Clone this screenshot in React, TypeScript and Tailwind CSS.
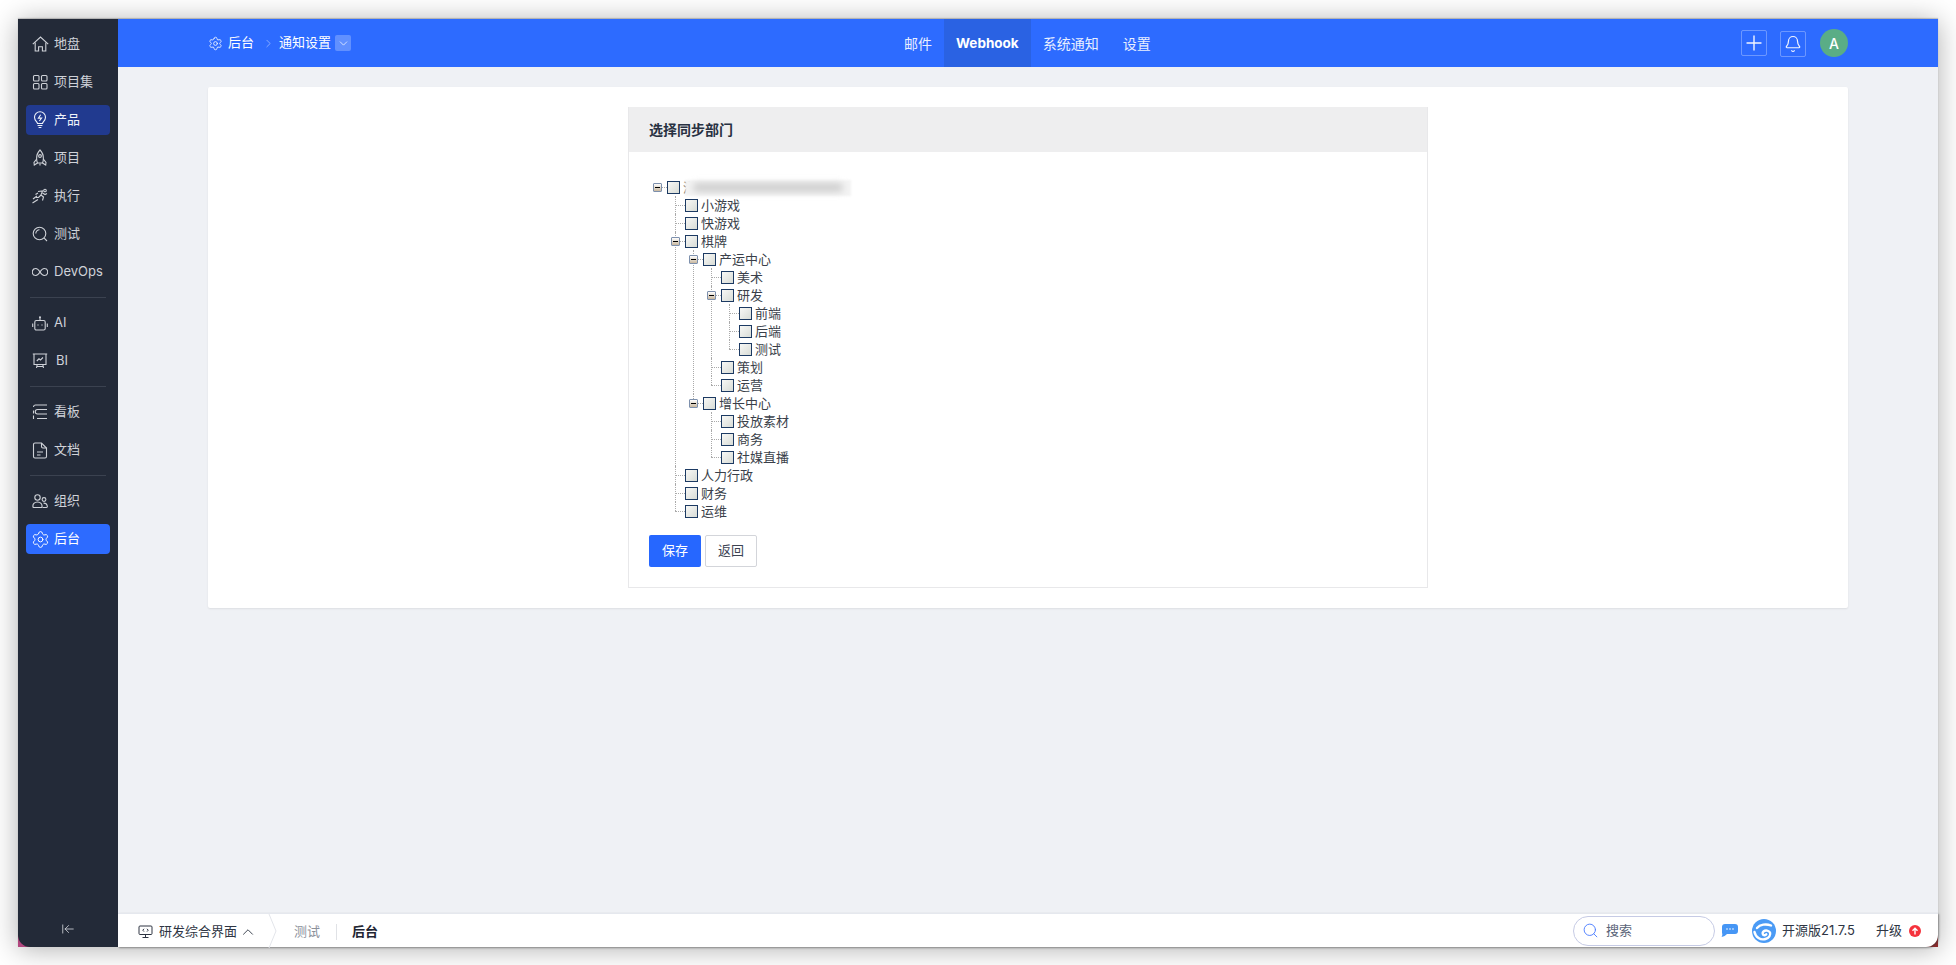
import { Bell, ChevronDown, ChevronRight, ChevronUp, Plus, Search, ArrowLeftToLine, Settings } from "lucide-react";
import type { ReactNode } from "react";

const font = "font-['Inter','Noto_Sans_CJK_SC',sans-serif]";

function IconHouse() {
  return (
    <svg width="17" height="16" viewBox="0 0 17 16" fill="none" stroke="currentColor" strokeWidth="1.1">
      <path d="M.8 8.200 8.500 1l7.700 7.200" />
      <path d="M3.200 6.600V15h3.400v-4.200h3.800V15h3.400V6.600" />
    </svg>
  );
}

function IconGrid() {
  return (
    <svg width="16" height="16" viewBox="0 0 16 16" fill="none" stroke="currentColor" strokeWidth="1.1">
      <rect x="1.500" y="1.500" width="5.500" height="5.500" rx="1" />
      <rect x="9.500" y="1.500" width="5.500" height="5.500" rx="1" />
      <rect x="1.500" y="9.500" width="5.500" height="5.500" rx="1" />
      <rect x="9.500" y="9.500" width="5.500" height="5.500" rx="1" />
    </svg>
  );
}

function IconBulb() {
  return (
    <svg width="16" height="18" viewBox="0 0 16 18" fill="none" stroke="currentColor" strokeWidth="1.1">
      <path d="M5.500 12.500c0-1.600-3-2.600-3-6.200A5.500 5.500 0 0 1 8 .8a5.500 5.500 0 0 1 5.500 5.500c0 3.600-3 4.600-3 6.200z" />
      <path d="M8.600 3.800 6.400 7.100h3.200L7.400 10" />
      <path d="M5.600 14.500h4.800M6.600 16.500h2.800" />
    </svg>
  );
}

function IconRocket() {
  return (
    <svg width="16" height="18" viewBox="0 0 16 18" fill="none" stroke="currentColor" strokeWidth="1.1">
      <path d="M8 1C5.600 3.400 4.600 6.500 4.600 9.500c0 1.700.3 3.200.9 4.500h5c.6-1.300.9-2.800.9-4.500C11.400 6.500 10.400 3.400 8 1z" />
      <circle cx="8" cy="7" r="1.400" />
      <path d="M4.700 10 2 13.500 2.300 16 5.500 14M11.300 10 14 13.500 13.700 16 10.500 14M8 14.500V16.500" />
    </svg>
  );
}

function IconRun() {
  return (
    <svg width="16" height="16" viewBox="0 0 16 16" fill="none" stroke="currentColor" strokeWidth="1.1">
      <circle cx="13" cy="2.500" r="1.300" />
      <path d="M6 3.500 10.500 3 9 7l2.500 2-1 3.500M9 7 6.500 9.500 4 9.500M10.500 5 13 6.500 15 5.500" />
      <path d="M1 11 5 8M.5 15 6 11.500M3.500 6.500 6 5" />
    </svg>
  );
}

function IconTest() {
  return (
    <svg width="16" height="16" viewBox="0 0 16 16" fill="none" stroke="currentColor" strokeWidth="1.1">
      <circle cx="7.500" cy="7.500" r="6.300" />
      <path d="M3.800 7.500a3.700 3.700 0 0 1 3.700-3.700M12.200 12.200 15 15" />
    </svg>
  );
}

function IconLoop() {
  return (
    <svg width="16" height="10" viewBox="0 0 16 10" fill="none" stroke="currentColor" strokeWidth="1.1">
      <path d="M8 5C6.600 2.800 5.500 1.500 3.800 1.500a3.500 3.500 0 0 0 0 7C5.500 8.500 6.600 7.200 8 5c1.400-2.200 2.500-3.500 4.200-3.500a3.500 3.500 0 0 1 0 7C10.500 8.500 9.400 7.200 8 5z" />
    </svg>
  );
}

function IconBot() {
  return (
    <svg width="16" height="15" viewBox="0 0 16 15" fill="none" stroke="currentColor" strokeWidth="1.1">
      <rect x="2.800" y="4.500" width="10.400" height="9.500" rx="1.500" />
      <path d="M8 1.500v3M.7 7.500v3.500M15.300 7.500v3.500" />
      <circle cx="8" cy="1.200" r=".5" />
      <path d="M5.600 9h.8M9.600 9h.8" strokeWidth="1.500" />
    </svg>
  );
}

function IconBoardChart() {
  return (
    <svg width="16" height="16" viewBox="0 0 16 16" fill="none" stroke="currentColor" strokeWidth="1.1">
      <path d="M.8 1h14.400M2 1v10.500h12V1M4.500 15l.7-3.500M11.500 15l-.7-3.500M4.500 13.500h7" />
      <path d="M4.800 8 7 5.800l1.500 1.200L11 4.500" />
    </svg>
  );
}

function IconBoard() {
  return (
    <svg width="16" height="16" viewBox="0 0 16 16" fill="none" stroke="currentColor" strokeWidth="1.1">
      <path d="M15 1H3.500a2 2 0 0 0-2 2M15 5.500H5.500a2 2 0 0 0 0 4.500H15M15 14.500H5M1.500 6.500v3M1.500 11.500v3.500" />
    </svg>
  );
}

function IconDoc() {
  return (
    <svg width="16" height="17" viewBox="0 0 16 17" fill="none" stroke="currentColor" strokeWidth="1.1">
      <path d="M9.500 1H3a1.500 1.500 0 0 0-1.500 1.500v12A1.500 1.500 0 0 0 3 16h10a1.500 1.500 0 0 0 1.500-1.500V6z" />
      <path d="M9.500 1v3.500a1.500 1.500 0 0 0 1.500 1.500h3.500M5 10h6M5 13h3.500" />
    </svg>
  );
}

function IconPeople() {
  return (
    <svg width="16" height="14" viewBox="0 0 16 14" fill="none" stroke="currentColor" strokeWidth="1.1">
      <circle cx="5.500" cy="3.500" r="2.700" />
      <circle cx="12" cy="5.500" r="1.900" />
      <path d="M1 13c-.6-3 1.500-5 4.500-5s5 2 4.500 5c-.1.400-.4.500-.8.500H1.800C1.400 13.500 1.100 13.400 1 13z" />
      <path d="M10.500 13.500h3.500c1 0 1.500-.6 1.300-1.500-.3-1.700-1.800-3-3.800-2.900" />
    </svg>
  );
}

function IconMonitor() {
  return (
    <svg width="15" height="14" viewBox="0 0 15 14" fill="none" stroke="currentColor" strokeWidth="1">
      <rect x="1" y="1" width="13" height="8.500" rx="1" />
      <path d="M7.500 9.500V12.500M4.500 12.500h6M6 3.800 4.800 5.200 6 6.600M9 3.800l1.200 1.400L9 6.600" />
    </svg>
  );
}

function IconChat() {
  return (
    <svg width="17" height="15" viewBox="0 0 17 15" className="text-[#4696f5]">
      <path fill="currentColor" d="M4 1h10a3 3 0 0 1 3 3v4a3 3 0 0 1-3 3H6c-1.500 1.500-3 2.500-5.500 3 1-1.500 1-3 .5-4V4a3 3 0 0 1 3-3z" />
      <circle cx="6" cy="6" r=".8" fill="#fff" />
      <circle cx="9" cy="6" r=".8" fill="#fff" />
      <circle cx="12" cy="6" r=".8" fill="#fff" />
    </svg>
  );
}

function Logo() {
  return (
    <svg width="24" height="24" viewBox="0 0 24 24">
      <circle cx="12" cy="12" r="12" fill="#4b9bf5" />
      <path fill="none" stroke="#fff" strokeWidth="2.400" strokeLinecap="round" d="M5 9c3-3.500 9-4.500 14-2.500" />
      <path fill="none" stroke="#fff" strokeWidth="2.400" strokeLinecap="round" d="M2.500 13c1 5 6 8.500 11 7 3.500-1 5.500-4 4.500-6.500-1-2-4.500-2.800-6.500-1-1.500 1.300-1 3.500.8 3.700 1 .1 1.700-.4 2-1" />
    </svg>
  );
}

type NavItem = { label: string; icon: ReactNode; active?: "product" | "admin" };

const navGroups: NavItem[][] = [
  [
    { label: "地盘", icon: <IconHouse /> },
    { label: "项目集", icon: <IconGrid /> },
    { label: "产品", icon: <IconBulb />, active: "product" },
    { label: "项目", icon: <IconRocket /> },
    { label: "执行", icon: <IconRun /> },
    { label: "测试", icon: <IconTest /> },
    { label: "DevOps", icon: <IconLoop /> },
  ],
  [
    { label: "AI", icon: <IconBot /> },
    { label: "BI", icon: <IconBoardChart /> },
  ],
  [
    { label: "看板", icon: <IconBoard /> },
    { label: "文档", icon: <IconDoc /> },
  ],
  [
    { label: "组织", icon: <IconPeople /> },
    { label: "后台", icon: <Settings size={19} strokeWidth={1.2} />, active: "admin" },
  ],
];

function Sidebar() {
  return (
    <aside className="w-[100px] shrink-0 bg-[#232a38] flex flex-col pt-[10px] px-2 rounded-bl-[12px]">
      {navGroups.map((group, i) => (
        <div key={i}>
          {i > 0 && <div className="h-px bg-[#3b4250] mx-1 my-[10px]" />}
          <div className="flex flex-col gap-2">
            {group.map((item) => (
              <div
                key={item.label}
                className={
                  "h-[30px] flex items-center rounded-[4px] text-[13px] " +
                  (item.active === "product"
                    ? "bg-[#213a8f] text-[#f0f3fa]"
                    : item.active === "admin"
                      ? "bg-[#2d6bff] text-white"
                      : "text-[#cfd2d8]")
                }
              >
                <span className="w-[28px] flex justify-center shrink-0">{item.icon}</span>
                <span className={item.label === "BI" ? "ml-[2px]" : ""}>{item.label}</span>
              </div>
            ))}
          </div>
        </div>
      ))}
      <div className="mt-auto h-[34px] pb-[2px] flex items-center justify-center text-[#d5d8de]">
        <ArrowLeftToLine size={14} strokeWidth={1.4} />
      </div>
    </aside>
  );
}

function Header() {
  return (
    <header className="h-12 shrink-0 bg-[#2d6bff] text-white flex items-center relative">
      <div className="flex items-center pl-[90px] text-[13px]">
        <Settings size={15} strokeWidth={1.4} className="text-[#eef3ff]" />
        <span className="ml-[5px]">后台</span>
        <ChevronRight size={13} strokeWidth={1.2} className="ml-[8px] text-[#b7ccff]" />
        <span className="ml-[4px]">通知设置</span>
        <span className="ml-1 w-4 h-4 rounded-[2px] bg-white/25 flex items-center justify-center">
          <ChevronDown size={13} strokeWidth={1.3} />
        </span>
      </div>
      <nav className="absolute inset-y-0 left-[774px] flex text-[14px] text-[#e9efff]">
        <div className="px-3 flex items-center">邮件</div>
        <div className="px-3 flex items-center text-[13.5px] font-bold text-white bg-[#2a62e3]">Webhook</div>
        <div className="px-3 flex items-center">系统通知</div>
        <div className="px-3 flex items-center">设置</div>
      </nav>
      <div className="ml-auto flex items-center pr-[90px]">
        <button className="w-[26px] h-[26px] border border-white/30 rounded-[2px] flex items-center justify-center">
          <Plus size={24} strokeWidth={1.4} className="text-[#f2f5ff]" />
        </button>
        <button className="ml-[13px] w-[26px] h-[26px] mt-[2px] border border-white/30 rounded-[2px] flex items-center justify-center">
          <Bell size={18} strokeWidth={1.6} className="text-[#f2f5ff]" />
        </button>
        <div className="ml-[14px] w-7 h-7 rounded-full bg-[#5aad86] flex items-center justify-center text-[14px] font-medium text-white">
          A
        </div>
      </div>
    </header>
  );
}

type TreeNode = { label: string; blur?: boolean; children?: TreeNode[] };

const tree: TreeNode = {
  label: "",
  blur: true,
  children: [
    { label: "小游戏" },
    { label: "快游戏" },
    {
      label: "棋牌",
      children: [
        {
          label: "产运中心",
          children: [
            { label: "美术" },
            { label: "研发", children: [{ label: "前端" }, { label: "后端" }, { label: "测试" }] },
            { label: "策划" },
            { label: "运营" },
          ],
        },
        {
          label: "增长中心",
          children: [{ label: "投放素材" }, { label: "商务" }, { label: "社媒直播" }],
        },
      ],
    },
    { label: "人力行政" },
    { label: "财务" },
    { label: "运维" },
  ],
};

function Switcher() {
  return (
    <span className="relative w-[9px] h-[9px] ml-1 border border-[#7d90ad] bg-gradient-to-b from-white to-[#c9b89f] flex items-center justify-center rounded-[1px]">
      <span className="w-[5px] h-px bg-black" />
    </span>
  );
}

function TreeItem({ node, root, last }: { node: TreeNode; root?: boolean; last?: boolean }) {
  return (
    <li className="relative">
      {!root && (
        <>
          <span
            className={
              "absolute left-2 top-0 border-l border-dotted border-[#aaaaaa] " + (last ? "h-[9px]" : "bottom-0")
            }
          />
          <span className="absolute left-2 top-[9px] w-[10px] border-t border-dotted border-[#aaaaaa]" />
        </>
      )}
      <div className="relative h-[18px] flex items-center">
        <span className="w-[18px] shrink-0 flex items-center">
          {node.children && <Switcher />}
          {root && <span className="w-[5px] border-t border-dotted border-[#aaaaaa]" />}
        </span>
        <span className="w-[13px] h-[13px] shrink-0 border border-[#1c3a63] bg-gradient-to-br from-[#f8f8f6] to-[#d8dcd6]" />
        {node.blur ? (
          <span className="relative ml-[3px] text-[13px] leading-none text-[#333]">
            <span>海</span>
            <span className="absolute left-[2px] -top-[1px] w-[166px] h-[16px] bg-[#f3f3f3] blur-[1px] flex items-center">
              <span className="ml-[8px] w-[150px] h-[9px] bg-[#d0d0d0] rounded-full blur-[3px]" />
            </span>
          </span>
        ) : (
          <span className="ml-[3px] text-[13px] leading-none text-[#3a3f4a]">{node.label}</span>
        )}
      </div>
      {node.children && (
        <ul className="pl-[18px]">
          {node.children.map((c, i) => (
            <TreeItem key={c.label} node={c} last={i === node.children!.length - 1} />
          ))}
        </ul>
      )}
    </li>
  );
}

function Panel() {
  return (
    <section className="w-[800px] mx-auto border border-t-0 border-[#e8e8ea] h-[481px]">
      <div className="h-[45px] bg-[#eeeeef] flex items-center pl-5 text-[14px] font-bold text-[#283142]">选择同步部门</div>
      <div className="pl-5 pt-[26px]">
        <ul>
          <TreeItem node={tree} root />
        </ul>
        <div className="flex gap-1 mt-[15px]">
          <button className="w-[52px] h-8 rounded-[2px] bg-[#2667ff] text-white text-[13px]">保存</button>
          <button className="w-[52px] h-8 rounded-[2px] bg-white border border-[#d3d5da] text-[#3c4353] text-[13px]">返回</button>
        </div>
      </div>
    </section>
  );
}

function BottomBar() {
  return (
    <footer className="h-[34px] shrink-0 pt-[2px] bg-white border-t border-[#e5e8ee] flex items-center text-[13px] rounded-br-[12px] shadow-[1px_1px_2px_rgba(60,60,60,0.5)]">
      <div className="flex items-center pl-5 text-[#2e3543]">
        <IconMonitor />
        <span className="ml-[6px]">研发综合界面</span>
        <ChevronUp size={18} strokeWidth={1.2} className="ml-[2px]" />
      </div>
      <svg width="10" height="34" viewBox="0 0 10 34" className="ml-[11px] -mt-[2px] text-[#e3e5ea]" fill="none" stroke="currentColor">
        <path d="M1 0 8 17 1 34" />
      </svg>
      <span className="ml-4 text-[#8c919b]">测试</span>
      <span className="ml-4 w-px h-4 bg-[#e0e2e6]" />
      <span className="ml-[15px] font-bold text-[#1f2533]">后台</span>
      <div className="ml-auto -mt-[2px] flex items-center pr-[17px]">
        <div className="w-[142px] h-[30px] rounded-full border border-[#c6cbe5] flex items-center pl-[8px] text-[#5a6478]">
          <Search size={17} strokeWidth={1.3} className="text-[#4a7cff]" />
          <span className="ml-[7px]">搜索</span>
        </div>
        <span className="ml-[6px] flex"><IconChat /></span>
        <span className="ml-[14px] flex"><Logo /></span>
        <span className="ml-[6px] text-[#2e3543]">开源版21.7.5</span>
        <span className="ml-[21px] text-[#2e3543]">升级</span>
        <span className="ml-[7px] w-3 h-3 rounded-full bg-[#f5323c] flex items-center justify-center">
          <svg width="8" height="8" viewBox="0 0 8 8" fill="none" stroke="#fff" strokeWidth="1.4">
            <path d="M1.500 3.800 4 1.300l2.500 2.500M4 1.500V7.500" />
          </svg>
        </span>
      </div>
    </footer>
  );
}

export default function App() {
  return (
    <div className={"h-[965px] w-full bg-white px-[18px] pt-[19px] pb-[18px] overflow-hidden " + font}>
      <div className="h-full flex shadow-[0_2px_26px_rgba(0,0,0,0.32),0_-1px_1px_rgba(0,0,0,0.18)] bg-[linear-gradient(90deg,#b2477f_0%,#7d3a5c_50%,#8e2a2c_100%)]">
        <Sidebar />
        <div className="flex-1 min-w-0 flex flex-col">
          <Header />
          <main className="flex-1 bg-[#eff1f5] px-[90px] pt-5">
            <div className="bg-white rounded-[2px] shadow-[0_1px_2px_rgba(0,0,0,0.08)] h-[521px] pt-5">
              <Panel />
            </div>
          </main>
          <BottomBar />
        </div>
      </div>
    </div>
  );
}
